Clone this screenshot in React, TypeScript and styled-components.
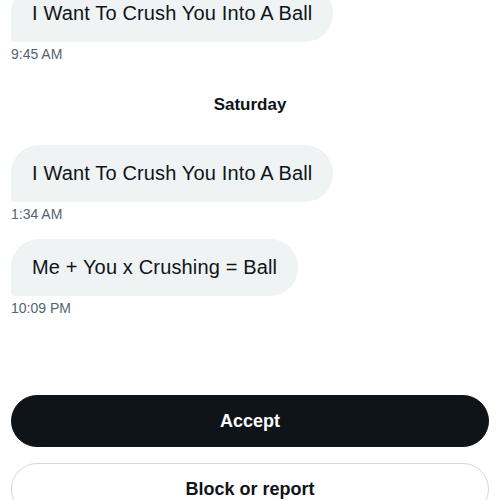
import styled, { createGlobalStyle } from 'styled-components';

const GlobalStyle = createGlobalStyle`
  html, body {
    margin: 0;
    padding: 0;
    background: #ffffff;
    overflow: hidden;
  }
  body {
    font-family: 'Liberation Sans', Arial, sans-serif;
    color: #0f1419;
  }
`;

type Message = {
  text: string;
  time: string;
};

const Screen = styled.div`
  display: flex;
  flex-direction: column;
  padding: 0 11px;
  margin-top: -15px;
`;

const Thread = styled.div`
  display: flex;
  flex-direction: column;
`;

const MessageGroup = styled.div`
  display: flex;
  flex-direction: column;
  align-items: flex-start;
  margin-bottom: 17px;
`;

const Bubble = styled.div`
  background: #eff3f4;
  color: #0f1419;
  font-size: 20px;
  line-height: 24px;
  padding: 16px 21px 17px;
  border-radius: 28px 28px 28px 4px;
  letter-spacing: 0.15px;
  white-space: nowrap;
`;

const Time = styled.span`
  margin-top: 4px;
  font-size: 14px;
  line-height: 16px;
  color: #536471;
`;

const DayLabel = styled.div`
  text-align: center;
  font-size: 17px;
  line-height: 20px;
  font-weight: 700;
  margin: 16px 0 30px;
`;

const Actions = styled.div`
  display: flex;
  flex-direction: column;
  gap: 16px;
  margin-top: 62px;
`;

const ActionButton = styled.button<{ $primary?: boolean }>`
  display: flex;
  align-items: center;
  justify-content: center;
  height: 52px;
  width: 100%;
  border-radius: 26px;
  font-family: 'Liberation Sans', Arial, sans-serif;
  font-size: 18px;
  font-weight: 700;
  cursor: pointer;
  background: ${({ $primary }) => ($primary ? '#0f1419' : '#ffffff')};
  color: ${({ $primary }) => ($primary ? '#ffffff' : '#0f1419')};
  border: 1px solid ${({ $primary }) => ($primary ? '#0f1419' : '#cfd9de')};
`;

const earlier: Message[] = [
  { text: 'I Want To Crush You Into A Ball', time: '9:45 AM' },
];

const saturday: Message[] = [
  { text: 'I Want To Crush You Into A Ball', time: '1:34 AM' },
  { text: 'Me + You x Crushing = Ball', time: '10:09 PM' },
];

const MessageItem = ({ text, time }: Message) => (
  <MessageGroup>
    <Bubble>{text}</Bubble>
    <Time>{time}</Time>
  </MessageGroup>
);

const App = () => {
  return (
    <>
      <GlobalStyle />
      <Screen>
        <Thread>
          {earlier.map((m) => (
            <MessageItem key={m.time} {...m} />
          ))}
          <DayLabel>Saturday</DayLabel>
          {saturday.map((m) => (
            <MessageItem key={m.time} {...m} />
          ))}
        </Thread>
        <Actions>
          <ActionButton $primary>Accept</ActionButton>
          <ActionButton>Block or report</ActionButton>
        </Actions>
      </Screen>
    </>
  );
};

export default App;
